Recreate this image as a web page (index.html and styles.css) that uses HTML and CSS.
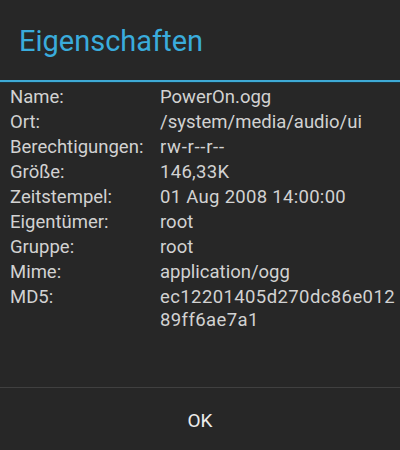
FILE: index.html
```html
<!DOCTYPE html>
<html lang="de">
<head>
<meta charset="utf-8">
<link rel="stylesheet" href="styles.css">
</head>
<body>
<div class="dialog">
  <header class="head">
    <h1 class="title">Eigenschaften</h1>
  </header>
  <div class="rule"></div>
  <dl class="props">
    <dt>Name:</dt><dd>PowerOn.ogg</dd>
    <dt>Ort:</dt><dd>/system/media/audio/ui</dd>
    <dt>Berechtigungen:</dt><dd class="perm">rw-r--r--</dd>
    <dt>Größe:</dt><dd class="num">146,33K</dd>
    <dt>Zeitstempel:</dt><dd class="num">01 Aug 2008 14:00:00</dd>
    <dt>Eigentümer:</dt><dd>root</dd>
    <dt>Gruppe:</dt><dd>root</dd>
    <dt>Mime:</dt><dd>application/ogg</dd>
    <dt>MD5:</dt><dd class="hash">ec12201405d270dc86e01289ff6ae7a1</dd>
  </dl>
  <div class="spacer"></div>
  <footer class="actions">
    <button class="btn">OK</button>
  </footer>
</div>
</body>
</html>
```
FILE: styles.css
```css
html, body {
  margin: 0;
  padding: 0;
  background: #272727;
}
.dialog {
  width: 400px;
  height: 450px;
  display: flex;
  flex-direction: column;
  background: #272727;
  font-family: Roboto, "Noto Sans", sans-serif;
}
.head {
  height: 80px;
  box-sizing: border-box;
  padding: 23px 0 0 19px;
}
.title {
  margin: 0;
  font-size: 29px;
  line-height: 36px;
  font-weight: 400;
  color: #3aacdc;
}
.rule {
  height: 2px;
  background: #3eaad6;
  border-bottom: 1px solid #1c3540;
}
.props {
  margin: 0;
  padding: 2px 4px 0 10px;
  display: grid;
  grid-template-columns: 150px 1fr;
  font-size: 18.5px;
  line-height: 25px;
  color: #d2d2d2;
}
.props dt, .props dd {
  margin: 0;
}
.props .perm {
  letter-spacing: 0.7px;
}
.props .num {
  letter-spacing: 0.3px;
}
.props .hash {
  word-break: break-all;
  letter-spacing: 0.4px;
  line-height: 23px;
  padding-top: 1px;
}
.spacer {
  flex: 1;
}
.actions {
  height: 62px;
  border-top: 1px solid #404040;
  display: flex;
}
.btn {
  flex: 1;
  background: none;
  border: 0;
  padding: 2px 0 0 0;
  font-family: Roboto, "Noto Sans", sans-serif;
  font-size: 19px;
  color: #ececec;
}
```
